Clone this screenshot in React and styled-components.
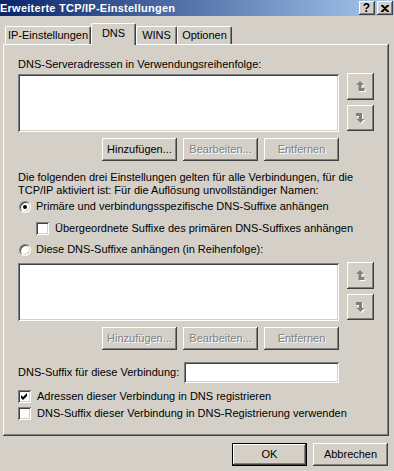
import React from "react";
import styled, { createGlobalStyle, css } from "styled-components";

const Global = createGlobalStyle`
  html, body { margin: 0; padding: 0; background: #d4d0c8; }
  #root { width: 394px; height: 471px; }
`;

const raised = css`
  box-shadow: inset -1px -1px #404040, inset 1px 1px #ffffff,
    inset -2px -2px #808080, inset 2px 2px #d4d0c8;
`;
const sunken = css`
  box-shadow: inset 1px 1px #808080, inset -1px -1px #ffffff,
    inset 2px 2px #404040, inset -2px -2px #d4d0c8;
`;

const Window = styled.div`
  width: 394px;
  height: 471px;
  background: #d4d0c8;
  display: flex;
  flex-direction: column;
  overflow: hidden;
  font-family: "Liberation Sans", Arial, sans-serif;
  font-size: 11px;
  line-height: 13px;
  color: #000;
`;

const TitleBar = styled.div`
  height: 16px;
  flex: none;
  background: linear-gradient(to right, #0a246a, #a6caf0);
  display: flex;
  align-items: flex-start;
  justify-content: space-between;
  padding-right: 1px;
`;

const TitleText = styled.div`
  color: #fff;
  font-weight: bold;
  font-size: 11px;
  letter-spacing: 0.25px;
  line-height: 14px;
  margin-top: 1px;
  white-space: nowrap;
`;

const TitleButtons = styled.div`
  display: flex;
  gap: 2px;
  margin-top: 1px;
`;

const TitleButton = styled.div`
  width: 16px;
  height: 14px;
  background: #d4d0c8;
  ${raised};
  display: flex;
  align-items: center;
  justify-content: center;
  font-weight: bold;
  font-size: 12px;
  line-height: 11px;
  padding-right: 1px;
  box-sizing: border-box;
`;

const TabStrip = styled.div`
  display: flex;
  align-items: flex-end;
  margin-top: 7px;
  padding-left: 5px;
  height: 21px;
  flex: none;
  position: relative;
  z-index: 1;
`;

const Tab = styled.div`
  box-sizing: border-box;
  width: ${(p) => p.$w}px;
  height: ${(p) => (p.$active ? 22 : 18)}px;
  margin-bottom: ${(p) => (p.$active ? -1 : 0)}px;
  border-top: 1px solid #fff;
  border-left: 1px solid #fff;
  border-right: 1px solid #404040;
  border-radius: 2px 2px 0 0;
  box-shadow: inset -1px 0 #808080;
  background: #d4d0c8;
  text-align: center;
  padding-top: ${(p) => (p.$active ? 3 : 2)}px;
  white-space: nowrap;
`;

const Panel = styled.div`
  box-sizing: border-box;
  flex: none;
  margin-left: 3px;
  width: 386px;
  height: 392px;
  box-shadow: inset -1px -1px #404040, inset 1px 1px #ffffff,
    inset -2px -2px #808080;
  padding: 14px 0 0 15px;
  display: flex;
  flex-direction: column;
`;

const Label = styled.div`
  white-space: nowrap;
  margin-top: ${(p) => p.$mt || 0}px;
`;

const ListRow = styled.div`
  display: flex;
  align-items: flex-start;
  margin-top: ${(p) => p.$mt}px;
`;

const ListBox = styled.div`
  width: 321px;
  height: 58px;
  margin-top: 1px;
  background: #fff;
  ${sunken};
`;

const SideButtons = styled.div`
  display: flex;
  flex-direction: column;
  gap: 5px;
  margin-left: 8px;
`;

const ArrowButton = styled.div`
  width: 27px;
  height: ${(p) => p.$h}px;
  background: #d4d0c8;
  ${raised};
  display: flex;
  align-items: center;
  justify-content: center;
`;

const ButtonRow = styled.div`
  display: flex;
  justify-content: flex-end;
  gap: 6px;
  width: 321px;
  margin-top: ${(p) => p.$mt}px;
`;

const PushButton = styled.button`
  width: 75px;
  height: 23px;
  padding: 0;
  border: none;
  margin: 0;
  background: #d4d0c8;
  font-family: inherit;
  font-size: 11px;
  line-height: 13px;
  color: ${(p) => (p.$disabled ? "#808080" : "#000")};
  text-shadow: ${(p) => (p.$disabled ? "1px 1px 0 #fff" : "none")};
  ${(p) =>
    p.$default
      ? css`
          box-shadow: inset 0 0 0 1px #000, inset -2px -2px #404040,
            inset 2px 2px #ffffff, inset -3px -3px #808080,
            inset 3px 3px #d4d0c8;
        `
      : raised};
  display: flex;
  align-items: center;
  justify-content: center;
`;

const Paragraph = styled.div`
  margin-top: ${(p) => p.$mt}px;
  white-space: nowrap;
`;

const OptionRow = styled.div`
  display: flex;
  align-items: center;
  height: 13px;
  gap: ${(p) => p.$gap}px;
  margin-top: ${(p) => p.$mt}px;
  padding-left: ${(p) => p.$indent || 0}px;
  white-space: nowrap;
`;

const Radio = styled.span`
  position: relative;
  box-sizing: border-box;
  width: 12px;
  height: 12px;
  margin-left: 1px;
  flex: none;
  border-radius: 50%;
  background: #fff;
  border: 1px solid;
  border-color: #808080 #ffffff #ffffff #808080;
  box-shadow: inset 1px 1px 0 #404040, inset -1px -1px 0 #d4d0c8;
  &::after {
    content: "";
    display: ${(p) => (p.$checked ? "block" : "none")};
    position: absolute;
    left: 3px;
    top: 3px;
    width: 4px;
    height: 4px;
    border-radius: 50%;
    background: #000;
  }
`;

const CheckBox = styled.span`
  width: 13px;
  height: 13px;
  flex: none;
  background: #fff;
  ${sunken};
  display: flex;
  align-items: center;
  justify-content: center;
`;

const SuffixRow = styled.div`
  display: flex;
  align-items: center;
  height: 21px;
  margin-top: ${(p) => p.$mt}px;
`;

const SuffixLabel = styled.div`
  width: 166px;
  white-space: nowrap;
`;

const TextInput = styled.div`
  width: 155px;
  height: 21px;
  background: #fff;
  ${sunken};
`;

const DialogButtons = styled.div`
  display: flex;
  justify-content: flex-end;
  gap: 6px;
  padding-right: 6px;
  margin-top: 7px;
`;

const CloseGlyph = () => (
  <svg width="8" height="7" viewBox="0 0 8 7">
    <path d="M0 0h2l2 2 2-2h2v1L5 3.5 8 6v1H6L4 5 2 7H0V6l3-2.5L0 1z" fill="#000" />
  </svg>
);

const UP_POINTS = "0,5 4,1 8,5 5.5,5 5.5,8 8.5,8 8.5,11 2.5,11 2.5,5";
const DOWN_POINTS = "8.5,7 4.5,11 0.5,7 3,7 3,4 0,4 0,1 6,1 6,7";

const Arrow = ({ down }) => {
  const pts = down ? DOWN_POINTS : UP_POINTS;
  return (
    <svg width="10" height="13" viewBox="0 0 10 13">
      <polygon points={pts} fill="#fff" transform="translate(1 1)" />
      <polygon points={pts} fill="#808080" />
    </svg>
  );
};

const CheckMark = () => (
  <svg width="7" height="7" viewBox="0 0 7 7">
    <polygon points="0,2 2,4 6,0 6,3 2,7 0,5" fill="#000" />
  </svg>
);

const Buttons = ({ disabled, mt }) => (
  <ButtonRow $mt={mt}>
    <PushButton $disabled={disabled}>Hinzufügen...</PushButton>
    <PushButton $disabled>Bearbeiten...</PushButton>
    <PushButton $disabled>Entfernen</PushButton>
  </ButtonRow>
);

const OrderedList = ({ mt }) => (
  <ListRow $mt={mt}>
    <ListBox />
    <SideButtons>
      <ArrowButton $h={27}>
        <Arrow />
      </ArrowButton>
      <ArrowButton $h={26}>
        <Arrow down />
      </ArrowButton>
    </SideButtons>
  </ListRow>
);

export default function App() {
  return (
    <Window>
      <Global />
      <TitleBar>
        <TitleText>Erweiterte TCP/IP-Einstellungen</TitleText>
        <TitleButtons>
          <TitleButton>?</TitleButton>
          <TitleButton>
            <CloseGlyph />
          </TitleButton>
        </TitleButtons>
      </TitleBar>
      <TabStrip>
        <Tab $w={86}>IP-Einstellungen</Tab>
        <Tab $w={45} $active>
          DNS
        </Tab>
        <Tab $w={41}>WINS</Tab>
        <Tab $w={55}>Optionen</Tab>
      </TabStrip>
      <Panel>
        <Label>DNS-Serveradressen in Verwendungsreihenfolge:</Label>
        <OrderedList mt={2} />
        <Buttons mt={6} />
        <Paragraph $mt={10}>
          Die folgenden drei Einstellungen gelten für alle Verbindungen, für die
          <br />
          TCP/IP aktiviert ist: Für die Auflösung unvollständiger Namen:
        </Paragraph>
        <OptionRow $mt={3} $gap={5}>
          <Radio $checked />
          Primäre und verbindungsspezifische DNS-Suffixe anhängen
        </OptionRow>
        <OptionRow $mt={9} $gap={6} $indent={18}>
          <CheckBox />
          Übergeordnete Suffixe des primären DNS-Suffixes anhängen
        </OptionRow>
        <OptionRow $mt={8} $gap={5}>
          <Radio />
          Diese DNS-Suffixe anhängen (in Reihenfolge):
        </OptionRow>
        <OrderedList mt={6} />
        <Buttons mt={6} disabled />
        <SuffixRow $mt={12}>
          <SuffixLabel>DNS-Suffix für diese Verbindung:</SuffixLabel>
          <TextInput />
        </SuffixRow>
        <OptionRow $mt={7} $gap={6}>
          <CheckBox>
            <CheckMark />
          </CheckBox>
          Adressen dieser Verbindung in DNS registrieren
        </OptionRow>
        <OptionRow $mt={4} $gap={6}>
          <CheckBox />
          DNS-Suffix dieser Verbindung in DNS-Registrierung verwenden
        </OptionRow>
      </Panel>
      <DialogButtons>
        <PushButton $default>OK</PushButton>
        <PushButton>Abbrechen</PushButton>
      </DialogButtons>
    </Window>
  );
}
